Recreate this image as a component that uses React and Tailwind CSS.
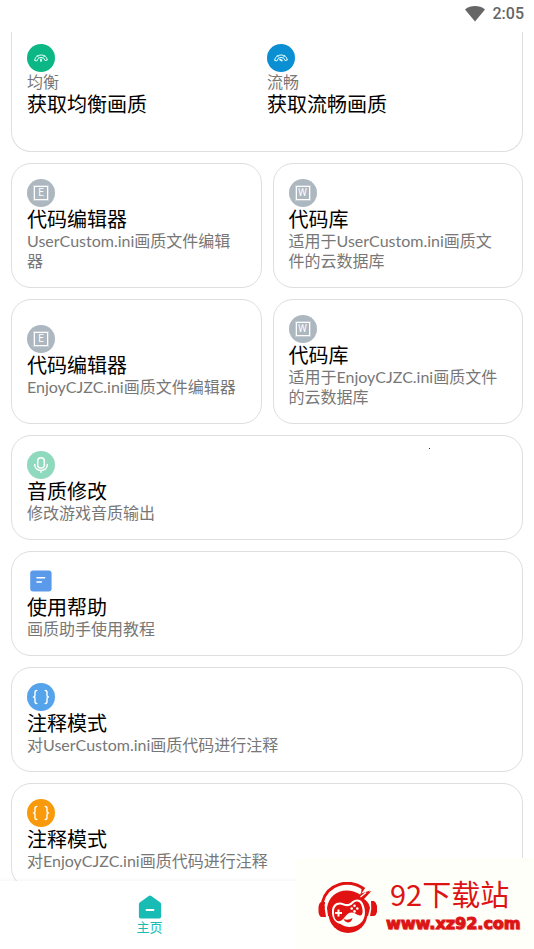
import React from 'react';

function GaugeIcon({ color, needle }) {
  return (
    <svg viewBox="0 0 28 28" className="size-7 shrink-0" aria-hidden="true">
      <circle cx="14" cy="14" r="14" fill={color} />
      <g fill="none" stroke="#e6fffb" strokeLinejoin="round" strokeLinecap="round">
        <path d="M7.6 16a6.6 6.6 0 0 1 12.8 0l-2.4.6a4.1 4.1 0 0 0-8 0z" strokeWidth="1" />
        <path d="M10.2 11.4l1.3 1.7M17.8 11.4l-1.3 1.7" strokeWidth=".9" />
        <path d={needle} strokeWidth="1.7" />
      </g>
    </svg>
  );
}

function LetterIcon({ letter }) {
  return (
    <span className="flex size-7 shrink-0 items-center justify-center rounded-full bg-[#acb7c0]">
      <span className="flex size-3.5 items-center justify-center border border-white font-['Roboto',sans-serif] text-[10px] leading-3 text-white outline outline-white/30">
        {letter}
      </span>
    </span>
  );
}

function MicIcon() {
  return (
    <svg viewBox="0 0 28 28" className="size-7 shrink-0" aria-hidden="true">
      <circle cx="14" cy="14" r="14" fill="#8fd9bf" />
      <g fill="none" stroke="#fff" strokeWidth="1.5" strokeLinecap="round">
        <rect x="10.7" y="6.8" width="6.6" height="10.2" rx="3.3" />
        <path d="M7.7 13.6c0 7.8 12.6 7.8 12.6 0M14 19.6v1.7" />
      </g>
    </svg>
  );
}

function NoteIcon() {
  return (
    <svg viewBox="0 0 28 28" className="size-7 shrink-0" aria-hidden="true">
      <rect x="3.2" y="3.6" width="21.4" height="21" rx="3" fill="#5b9aeb" />
      <path d="M10 10.8h7.6M10 15h4.4" stroke="#fff" strokeWidth="1.6" strokeLinecap="round" />
    </svg>
  );
}

function BracesIcon({ color }) {
  return (
    <svg viewBox="0 0 28 28" className="size-7 shrink-0" aria-hidden="true">
      <circle cx="14" cy="14" r="14" fill={color} />
      <g fill="none" stroke="#fff" strokeWidth="1.4" strokeLinecap="round" strokeLinejoin="round">
        <path d="M9.8 7.5Q8 7.5 8 9.5V12Q8 14 6.5 14Q8 14 8 16V18.5Q8 20.5 9.8 20.5" />
        <path d="M18.2 7.5Q20 7.5 20 9.5V12Q20 14 21.5 14Q20 14 20 16V18.5Q20 20.5 18.2 20.5" />
      </g>
    </svg>
  );
}

function SiteLogo() {
  return (
    <svg viewBox="0 0 60 52" className="h-[52px] w-[60px] shrink-0" aria-hidden="true">
      <g fill="#e01212">
        <path d="M7 20H3Q1 21 .5 25V30Q1 34 3 35H8Q6 27 7 20z" />
        <path d="M53 19H56Q58 20 59 24V30Q58.5 33 56 34H52Q54 27 53 19z" />
        <circle cx="30" cy="31.5" r="19.5" />
        <path d="M9 26C11 11 27 3 43 13L46 11.5L53.5 9L46 17Q51 20 52 26L50 34H10z" />
      </g>
      <path d="M4.5 20C9 2 30-4 45.5 6.5" fill="none" stroke="#e01212" strokeWidth="3" />
      <path d="M44 6L47.5 5.5L43.5 11.5L52 8.5L45 17L42 13.5z" fill="#e01212" />
      <path d="M7.5 24C11 7 30 0 43 10.5" fill="none" stroke="#fffffa" strokeWidth="2.2" />
      <path d="M42.5 15L48 10.5" stroke="#fffffa" strokeWidth="1.2" />
      <path
        d="M14 29C14 22 20 18.5 26 21.5C30 23 32 21.5 34 19.5C38 16 43 17 45 21.5C47.5 27 48 34 44.5 39C40 45.5 29 47 22.5 42C18 41 13.5 37 14 29z"
        fill="#fffffa"
      />
      <path
        d="M16 29.5C16 24 20.5 21 25 23.3C29.5 25.3 32.5 24 35 21.5C38 18.5 41.5 19 43 22.5C44.5 26 45.5 31 43.5 33C40.5 35 37.5 30.5 34 30.5C30.5 30.5 28.5 32.5 26 36C24 39 20.5 40.5 18 38C16 36 16 32.5 16 29.5z"
        fill="#e01212"
      />
      <path d="M20.5 27.5V34.5M17 31H24" stroke="#fffffa" strokeWidth="2" />
      <g fill="#fffffa">
        <circle cx="36.5" cy="23.8" r="1.3" />
        <circle cx="36.5" cy="29.4" r="1.3" />
        <circle cx="33.7" cy="26.6" r="1.3" />
        <circle cx="39.3" cy="26.6" r="1.3" />
      </g>
      <path d="M25.5 37Q30 39 34.5 36Q33.5 40.5 29.5 40.5Q26.5 40 25.5 37z" fill="#e01212" />
    </svg>
  );
}

function Card({ icon, title, text, children }) {
  return (
    <button
      type="button"
      className="relative flex w-full flex-col items-start justify-center rounded-[20px] border border-[#dedede] bg-white px-[15px] pt-[15px] pb-4 text-left"
    >
      {icon}
      <span className="text-[20px] leading-6 text-black">{title}</span>
      <span className="text-[16px] leading-5 text-[#777777]">{text}</span>
      {children}
    </button>
  );
}

function Preset({ icon, label, title }) {
  return (
    <button type="button" className="flex flex-col items-start text-left">
      {icon}
      <span className="text-[16px] leading-5 text-[#777777]">{label}</span>
      <span className="text-[20px] leading-6 text-black">{title}</span>
    </button>
  );
}

export default function App() {
  return (
    <div className="relative flex h-screen flex-col overflow-hidden bg-white font-['Lato','Noto_Sans_CJK_SC',sans-serif]">
      <header className="flex h-8 shrink-0 items-center justify-end gap-2 px-2.5 pb-1">
        <svg viewBox="0 0 20 16" className="h-4 w-5" aria-label="Wi-Fi" role="img">
          <path d="M0 3.4C6-1 14-1 20 3.4L10 15.4z" fill="#666" />
        </svg>
        <time className="font-['Roboto',sans-serif] text-[16px] font-medium leading-5 text-[#666]">2:05</time>
      </header>

      <main className="flex min-h-0 flex-1 flex-col gap-[11px] overflow-hidden px-[11px]">
        <section className="grid shrink-0 grid-cols-2 rounded-b-[20px] border border-t-0 border-[#dedede] px-[15px] pt-3 pb-[35px]">
          <Preset
            icon={<GaugeIcon color="#0cb786" needle="M14 15.4V17" />}
            label="均衡"
            title="获取均衡画质"
          />
          <Preset
            icon={<GaugeIcon color="#0a8fd3" needle="M13 15.6L14.8 16.5" />}
            label="流畅"
            title="获取流畅画质"
          />
        </section>

        <section className="grid shrink-0 grid-cols-2 gap-[11px]">
          <Card icon={<LetterIcon letter="E" />} title="代码编辑器" text="UserCustom.ini画质文件编辑器" />
          <Card icon={<LetterIcon letter="W" />} title="代码库" text="适用于UserCustom.ini画质文件的云数据库" />
          <Card icon={<LetterIcon letter="E" />} title="代码编辑器" text="EnjoyCJZC.ini画质文件编辑器" />
          <Card icon={<LetterIcon letter="W" />} title="代码库" text="适用于EnjoyCJZC.ini画质文件的云数据库" />
        </section>

        <section className="grid shrink-0 gap-[11px]">
          <Card icon={<MicIcon />} title="音质修改" text="修改游戏音质输出">
            <span className="absolute top-3 right-23 size-px bg-[#333]" />
          </Card>
          <Card icon={<NoteIcon />} title="使用帮助" text="画质助手使用教程" />
          <Card icon={<BracesIcon color="#55a3ea" />} title="注释模式" text="对UserCustom.ini画质代码进行注释" />
          <Card icon={<BracesIcon color="#f99a0c" />} title="注释模式" text="对EnjoyCJZC.ini画质代码进行注释" />
        </section>
      </main>

      <nav className="relative grid h-17 shrink-0 grid-cols-2 bg-white px-8 shadow-[0_-2px_4px_rgba(0,0,0,0.03)]">
        <a href="#home" className="flex flex-col items-center pt-3.5 text-[13px] leading-4 text-[#18bcb4]">
          <svg viewBox="0 0 24 24" className="size-6" aria-hidden="true">
            <path
              d="M10.7.9a2.2 2.2 0 0 1 2.6 0l9 6.7c.5.4.8.9.8 1.5v12.4c0 1.2-.8 2-2 2H2.9c-1.2 0-2-.8-2-2V9.1c0-.6.3-1.1.8-1.5z"
              fill="#18bcb4"
            />
            <path d="M8.5 15h7" stroke="#fff" strokeWidth="1.8" strokeLinecap="round" />
          </svg>
          主页
        </a>
      </nav>

      <aside className="absolute right-0 bottom-0 flex h-[91px] w-[238px] gap-2 bg-[#fffffa] pt-5 pl-[22px]">
        <div className="pt-1">
          <SiteLogo />
        </div>
        <div className="flex flex-col gap-1 text-[#dc1414]">
          <span className="pl-1 font-['Noto_Sans_CJK_SC',sans-serif] text-[29px] leading-[30px]">92下载站</span>
          <span className="font-['DejaVu_Sans',sans-serif] text-[16px] leading-6 font-bold [text-shadow:1px_1px_1px_#dc141466] [-webkit-text-stroke:1px_#dc1414]">
            www.xz92.com
          </span>
        </div>
      </aside>
    </div>
  );
}
